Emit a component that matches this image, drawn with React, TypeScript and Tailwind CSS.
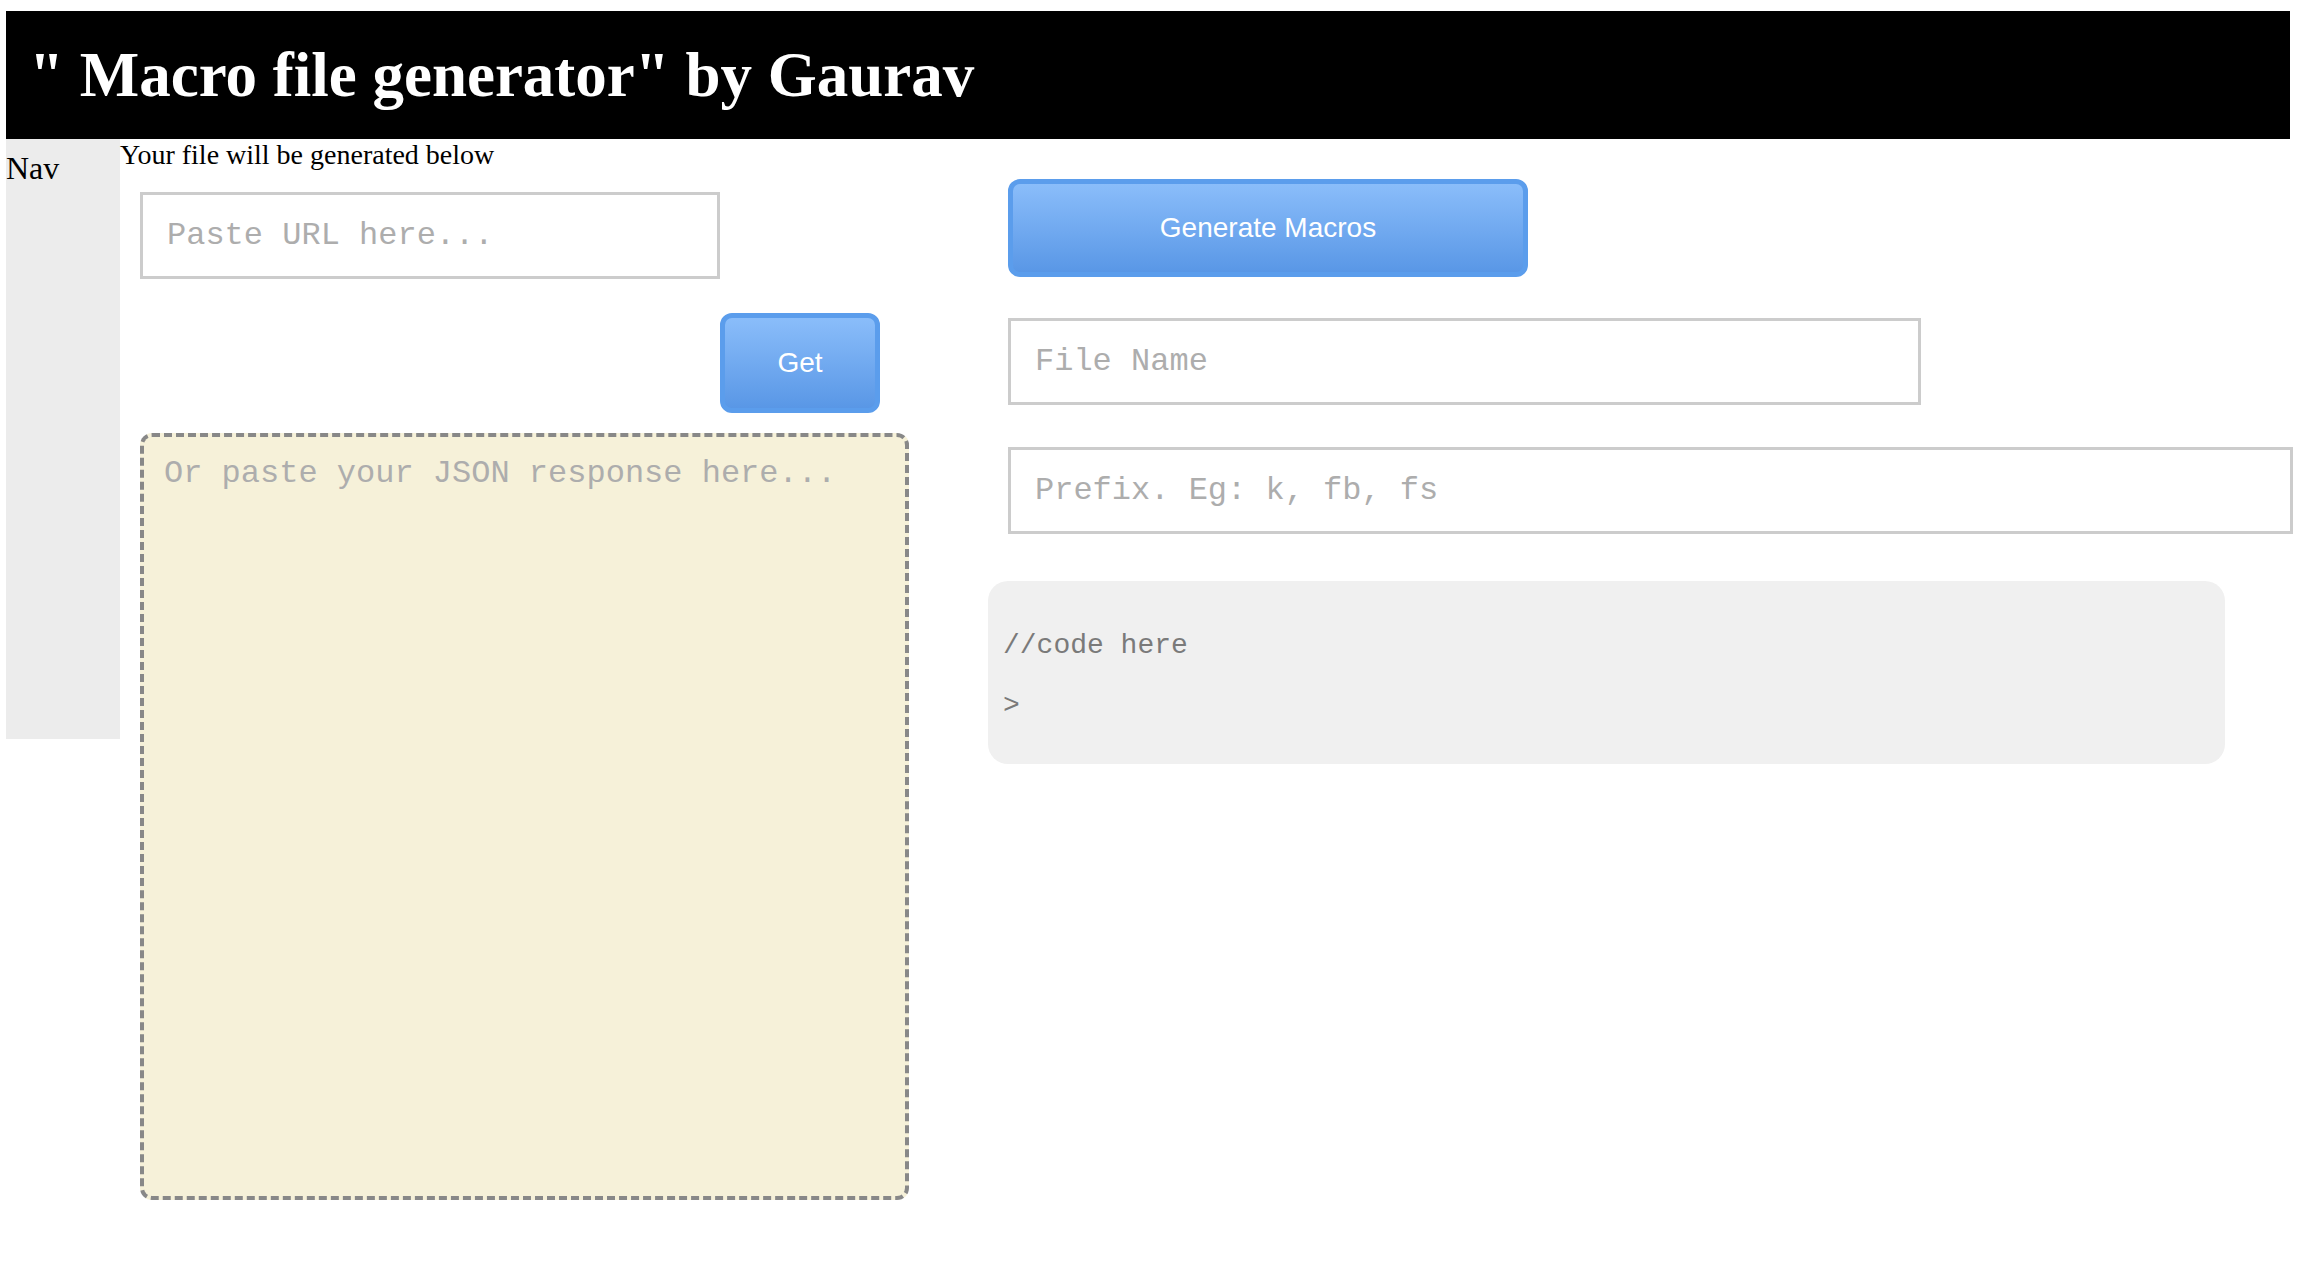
const serif = "font-['Liberation_Serif','Times_New_Roman',serif]"
const mono = "font-['Liberation_Mono','Courier_New',monospace]"
const sans = "font-['Liberation_Sans',Arial,sans-serif]"

const App = () => {
  return (
    <div className="min-h-[1266px] bg-white pt-[11px] pl-[6px]">
      <header className="flex h-[128px] w-[2284px] items-center bg-black pl-[23px]">
        <h1 className={`${serif} text-[63px] font-bold leading-[1.15] text-white`}>
          " Macro file generator" by Gaurav
        </h1>
      </header>

      <div className="flex">
        <nav className={`${serif} h-[600px] w-[114px] shrink-0 bg-[#ececec] pt-[11px] text-[32px] leading-[1.15] text-black`}>
          Nav
        </nav>

        <main className="flex-1">
          <p className={`${serif} text-[28px] leading-[31px] text-black`}>Your file will be generated below</p>

          <div className="flex">
            {/* left column: url + json */}
            <div className="w-[790px] shrink-0 pl-[20px]">
              <input
                type="text"
                placeholder="Paste URL here..."
                className={`${mono} mt-[22px] block h-[87px] w-[580px] border-[3px] border-[#cccccc] bg-white pl-[24px] text-[32px] outline-none placeholder:text-[#adadad]`}
              />
              <button
                type="button"
                className={`${sans} mt-[34px] ml-[580px] block h-[100px] w-[160px] rounded-[12px] border-[5px] border-[#5b9dec] bg-linear-to-b from-[#8abdfa] to-[#5997e6] text-[28px] text-white`}
              >
                Get
              </button>
              <textarea
                placeholder="Or paste your JSON response here..."
                className={`${mono} mt-[20px] block h-[767px] w-[769px] resize-none rounded-[12px] border-4 border-dashed border-[#888888] bg-[#f6f1d9] px-[20px] pt-[19px] text-[32px] leading-[1.133] outline-none placeholder:text-[#adadad]`}
              />
            </div>

            {/* right column: generator */}
            <div className="flex-1 pl-[78px]">
              <button
                type="button"
                className={`${sans} mt-[9px] ml-[20px] block h-[98px] w-[520px] rounded-[12px] border-[5px] border-[#5b9dec] bg-linear-to-b from-[#8abdfa] to-[#5997e6] text-[28px] text-white`}
              >
                Generate Macros
              </button>
              <input
                type="text"
                placeholder="File Name"
                className={`${mono} mt-[41px] ml-[20px] block h-[87px] w-[913px] border-[3px] border-[#cccccc] bg-white pl-[24px] text-[32px] outline-none placeholder:text-[#adadad]`}
              />
              <input
                type="text"
                placeholder="Prefix. Eg: k, fb, fs"
                className={`${mono} mt-[42px] ml-[20px] block h-[87px] w-[1285px] border-[3px] border-[#cccccc] bg-white pl-[24px] text-[32px] outline-none placeholder:text-[#adadad]`}
              />
              <div className={`${mono} mt-[47px] h-[183px] w-[1237px] rounded-[20px] bg-[#f0f0f0] pt-[37px] pl-[15px] text-[28px] leading-[55px] text-[#7a7a7a]`}>
                <div>//code here</div>
                <div className="mt-[5px]">&gt;</div>
              </div>
            </div>
          </div>
        </main>
      </div>
    </div>
  )
}

export default App
